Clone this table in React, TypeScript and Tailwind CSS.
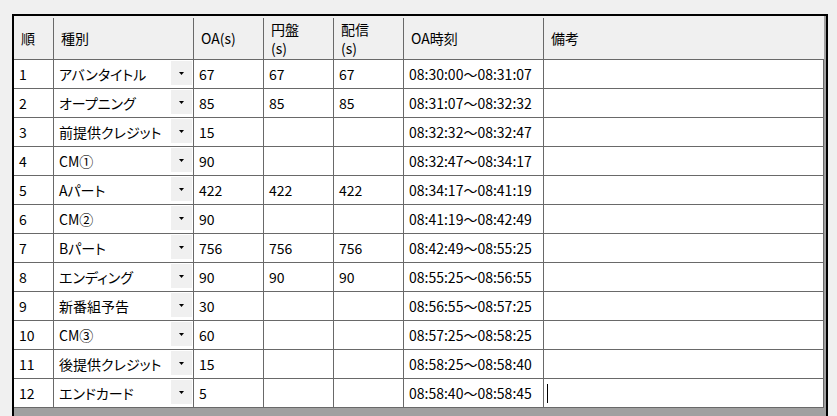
const rows = [
  ["1", "アバンタイトル", "67", "67", "67", "08:30:00〜08:31:07"],
  ["2", "オープニング", "85", "85", "85", "08:31:07〜08:32:32"],
  ["3", "前提供クレジット", "15", "", "", "08:32:32〜08:32:47"],
  ["4", "CM①", "90", "", "", "08:32:47〜08:34:17"],
  ["5", "Aパート", "422", "422", "422", "08:34:17〜08:41:19"],
  ["6", "CM②", "90", "", "", "08:41:19〜08:42:49"],
  ["7", "Bパート", "756", "756", "756", "08:42:49〜08:55:25"],
  ["8", "エンディング", "90", "90", "90", "08:55:25〜08:56:55"],
  ["9", "新番組予告", "30", "", "", "08:56:55〜08:57:25"],
  ["10", "CM③", "60", "", "", "08:57:25〜08:58:25"],
  ["11", "後提供クレジット", "15", "", "", "08:58:25〜08:58:40"],
  ["12", "エンドカード", "5", "", "", "08:58:40〜08:58:45"],
];

const headers = ["順", "種別", "OA(s)", "円盤\n(s)", "配信\n(s)", "OA時刻", "備考"];

const cols = "grid grid-cols-[40px_140px_70px_70px_70px_140px_280px]";

function HeaderCell({ label, last }: { label: string; last?: boolean }) {
  return (
    <div className="h-[44px] pt-[2px] border-b border-[#696969]">
      <div
        className={`h-full flex items-center pl-[7px] leading-[19px] whitespace-pre ${
          last ? "" : "border-r border-[#696969]"
        }`}
      >
        {label}
      </div>
    </div>
  );
}

function Cell({ children }: { children?: React.ReactNode }) {
  return (
    <div className="h-[29px] border-r border-b border-[#696969] bg-white flex items-center pl-[5px] whitespace-nowrap">
      {children}
    </div>
  );
}

export default function App() {
  return (
    <div
      className="h-[416px] overflow-hidden bg-[#f0f0f0] pt-[14px] pl-[12px] text-[14px] text-black [font-feature-settings:'palt']"
      style={{ fontFamily: '"Noto Sans CJK JP", "Noto Sans", sans-serif' }}
    >
      <div className="w-[816px] h-[410px] border-l-2 border-t-2 border-r-2 border-black bg-[#a0a0a0]">
        <div className={`${cols} w-[810px] bg-[#f0f0f0]`}>
          {headers.map((h, i) => (
            <HeaderCell key={h} label={h} last={i === headers.length - 1} />
          ))}
        </div>
        {rows.map((r, idx) => (
          <div key={r[0]} className={`${cols} w-[810px]`}>
            <Cell>{r[0]}</Cell>
            <div className="h-[29px] border-r border-b border-[#696969] bg-white flex items-start pl-[5px] pr-[1px]">
              <span className="flex-1 h-[28px] flex items-center whitespace-nowrap">{r[1]}</span>
              <span className="mt-[1px] w-[21px] h-[24px] bg-[#f0f0f0] flex items-center justify-center">
                <svg width="5" height="3" viewBox="0 0 5 3">
                  <path d="M0 0H5L2.5 3Z" fill="#000" />
                </svg>
              </span>
            </div>
            <Cell>{r[2]}</Cell>
            <Cell>{r[3]}</Cell>
            <Cell>{r[4]}</Cell>
            <Cell>{r[5]}</Cell>
            <div className="h-[29px] border-r border-b border-[#696969] bg-white flex items-center pl-[3px]">
              {idx === rows.length - 1 && <span className="w-px h-[19px] bg-black" />}
            </div>
          </div>
        ))}
      </div>
    </div>
  );
}
